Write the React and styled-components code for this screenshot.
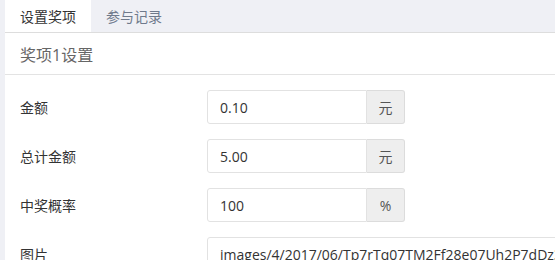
import React from "react";
import styled, { createGlobalStyle } from "styled-components";

const GlobalStyle = createGlobalStyle`
  html, body {
    margin: 0;
    padding: 0;
    background: #eff0f5;
    overflow: hidden;
  }
  body {
    font-family: "Open Sans", "Noto Sans CJK SC", sans-serif;
    font-size: 14px;
    color: #333;
  }
`;

const Page = styled.div`
  width: 555px;
  height: 260px;
  padding-left: 5px;
  box-sizing: border-box;
  overflow: hidden;
`;

const Tabs = styled.ul`
  display: flex;
  margin: 0;
  padding: 0;
  list-style: none;
  height: 32px;
`;

const Tab = styled.li`
  display: flex;
  align-items: center;
  padding: 0 15px 0 15px;
  width: 56px;
  font-size: 14px;
  color: ${(p) => (p.active ? "#333" : "#6f7a8c")};
  background: ${(p) => (p.active ? "#fff" : "transparent")};
`;

const Panel = styled.div`
  background: #fff;
  border-top: 1px solid #ddd;
  min-width: 600px;
`;

const Heading = styled.div`
  height: 41px;
  display: flex;
  align-items: center;
  padding-left: 15px;
  font-size: 16px;
  color: #666;
  border-bottom: 1px solid #e3e3e3;
`;

const Body = styled.div`
  padding: 15px 0 0 15px;
`;

const Row = styled.div`
  display: grid;
  grid-template-columns: 187px 1fr;
  align-items: center;
  margin-bottom: 15px;
`;

const Label = styled.label`
  font-size: 14px;
  color: #333;
`;

const Group = styled.div`
  display: flex;
  width: ${(p) => p.width || "198px"};
  height: 34px;
`;

const Input = styled.div`
  flex: 1;
  display: flex;
  align-items: center;
  padding-left: 12px;
  border: 1px solid #e2e2e2;
  border-radius: ${(p) => (p.full ? "3px" : "3px 0 0 3px")};
  font-size: 14px;
  color: #333;
  white-space: nowrap;
  overflow: hidden;
`;

const Addon = styled.div`
  width: 37px;
  display: flex;
  align-items: center;
  justify-content: center;
  background: #eee;
  border: 1px solid #dcdcdc;
  border-left: none;
  border-radius: 0 3px 3px 0;
  font-size: 14px;
  color: #555;
`;

const rows = [
  { label: "金额", value: "0.10", unit: "元" },
  { label: "总计金额", value: "5.00", unit: "元" },
  { label: "中奖概率", value: "100", unit: "%" },
];

export default function App() {
  return (
    <Page>
      <GlobalStyle />
      <Tabs>
        <Tab active>设置奖项</Tab>
        <Tab>参与记录</Tab>
      </Tabs>
      <Panel>
        <Heading>奖项1设置</Heading>
        <Body>
          {rows.map((r) => (
            <Row key={r.label}>
              <Label>{r.label}</Label>
              <Group>
                <Input>{r.value}</Input>
                <Addon>{r.unit}</Addon>
              </Group>
            </Row>
          ))}
          <Row>
            <Label>图片</Label>
            <Group width="400px">
              <Input full>images/4/2017/06/Tp7rTq07TM2Ff28e07Uh2P7dDz3Tf2.jpg</Input>
            </Group>
          </Row>
        </Body>
      </Panel>
    </Page>
  );
}
